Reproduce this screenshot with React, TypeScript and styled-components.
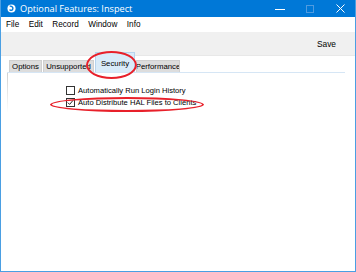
import styled, { createGlobalStyle } from "styled-components";

const Global = createGlobalStyle`
  html, body {
    margin: 0;
    padding: 0;
    background: #ffffff;
  }
  body {
    font-family: "Liberation Sans", Arial, sans-serif;
  }
`;

const Window = styled.div`
  width: 356px;
  height: 272px;
  box-sizing: border-box;
  border: 1px solid #4a9fe3;
  border-top: none;
  display: flex;
  flex-direction: column;
  background: #ffffff;
  overflow: hidden;
`;

const TitleBar = styled.div`
  height: 17px;
  background: #0078d7;
  display: flex;
  align-items: center;
  padding-left: 6px;
  color: #ffffff;
  font-family: "Open Sans", "Liberation Sans", sans-serif;
  font-size: 9.2px;
`;

const Title = styled.span`
  margin-left: 4px;
  flex: 1;
`;

const WinButtons = styled.div`
  display: flex;
  align-items: center;
  height: 100%;
`;

const WinButton = styled.div<{ $w: number }>`
  width: ${(p) => p.$w}px;
  height: 100%;
  display: flex;
  align-items: center;
  justify-content: center;
`;

const MenuBar = styled.div`
  height: 15px;
  display: flex;
  align-items: center;
  padding-left: 5px;
  gap: 9.5px;
  font-size: 8.2px;
  color: #000000;
`;

const Toolbar = styled.div`
  height: 23px;
  background: #f0f0f0;
  border-bottom: 1px solid #e8e8e8;
  display: flex;
  align-items: center;
  justify-content: flex-end;
  padding-right: 19px;
  font-size: 8.4px;
  color: #000000;
`;

const TabStrip = styled.div`
  display: flex;
  align-items: flex-end;
  height: 16px;
  padding-left: 8px;
`;

const Tab = styled.div<{ $w: number; $active?: boolean }>`
  width: ${(p) => p.$w}px;
  height: ${(p) => (p.$active ? 20 : 12)}px;
  box-sizing: border-box;
  background: ${(p) => (p.$active ? "#d9ebf9" : "#dddddd")};
  border: 1px solid ${(p) => (p.$active ? "#b6d4ee" : "#d0d0d0")};
  border-bottom: none;
  margin-right: 1px;
  display: flex;
  align-items: center;
  justify-content: center;
  font-size: 7.8px;
  color: #000000;
  white-space: nowrap;
  overflow: hidden;
  padding-top: ${(p) => (p.$active ? 1 : 0)}px;
`;

const Panel = styled.div`
  position: relative;
  flex: 1;
  margin-left: 6px;
  margin-right: 10px;
  border-top: 1px solid #d6e6f5;
  padding: 12px 0 0 59px;
  display: flex;
  flex-direction: column;
  gap: 2px;
  &::before {
    content: "";
    position: absolute;
    left: 0;
    top: 0;
    width: 1px;
    height: 40px;
    background: linear-gradient(#d0d0d0, rgba(208, 208, 208, 0));
  }
`;

const CheckRow = styled.label`
  display: flex;
  align-items: center;
  gap: 3px;
  height: 10px;
  font-size: 7.6px;
  color: #000000;
  white-space: nowrap;
`;

const Box = styled.span`
  width: 9px;
  height: 9px;
  box-sizing: border-box;
  border: 1px solid #333333;
  background: #ffffff;
  display: flex;
  align-items: center;
  justify-content: center;
`;

const Ring = styled.div<{ $x: number; $y: number; $w: number; $h: number }>`
  position: absolute;
  left: ${(p) => p.$x}px;
  top: ${(p) => p.$y}px;
  width: ${(p) => p.$w}px;
  height: ${(p) => p.$h}px;
  box-sizing: border-box;
  border: 2px solid #e8202a;
  border-radius: 50%;
  pointer-events: none;
`;

const Stage = styled.div`
  position: relative;
  width: 356px;
  height: 272px;
`;

function AppIcon() {
  return (
    <svg width="9" height="9" viewBox="0 0 10 10">
      <circle cx="5" cy="5" r="4.5" fill="#ffffff" />
      <path d="M3 2.5 C5 2 7 3.5 6.5 5.5 C6 7.5 3.5 7.5 3 6" fill="none" stroke="#0078d7" strokeWidth="1.6" />
    </svg>
  );
}

function Check({ checked, label }: { checked?: boolean; label: string }) {
  return (
    <CheckRow>
      <Box>
        {checked && (
          <svg width="7" height="7" viewBox="0 0 7 7">
            <path d="M0.8 3.6 L2.6 5.4 L6.2 1.2" fill="none" stroke="#222" strokeWidth="1" />
          </svg>
        )}
      </Box>
      {label}
    </CheckRow>
  );
}

export default function App() {
  return (
    <Stage>
      <Global />
      <Window>
        <TitleBar>
          <AppIcon />
          <Title>Optional Features: Inspect</Title>
          <WinButtons>
            <WinButton $w={30}>
              <svg width="10" height="10" viewBox="0 0 10 10">
                <path d="M0 5.5 H10" stroke="#ffffff" strokeWidth="1" />
              </svg>
            </WinButton>
            <WinButton $w={30}>
              <svg width="8" height="8" viewBox="0 0 8 8">
                <rect x="0.5" y="0.5" width="7" height="7" fill="none" stroke="#4f9be0" strokeWidth="1" />
              </svg>
            </WinButton>
            <WinButton $w={30}>
              <svg width="9" height="9" viewBox="0 0 9 9">
                <path d="M0.5 0.5 L8.5 8.5 M8.5 0.5 L0.5 8.5" stroke="#ffffff" strokeWidth="1" />
              </svg>
            </WinButton>
          </WinButtons>
        </TitleBar>
        <MenuBar>
          <span>File</span>
          <span>Edit</span>
          <span>Record</span>
          <span>Window</span>
          <span>Info</span>
        </MenuBar>
        <Toolbar>Save</Toolbar>
        <TabStrip>
          <Tab $w={33}>Options</Tab>
          <Tab $w={51}>Unsupported</Tab>
          <Tab $w={40} $active>Security</Tab>
          <Tab $w={44}>Performance</Tab>
        </TabStrip>
        <Panel>
          <Check label="Automatically Run Login History" />
          <Check checked label="Auto Distribute HAL Files to Clients" />
        </Panel>
      </Window>
      <Ring $x={86} $y={51} $w={51} $h={28} />
      <Ring $x={50} $y={97} $w={154} $h={15} />
    </Stage>
  );
}
